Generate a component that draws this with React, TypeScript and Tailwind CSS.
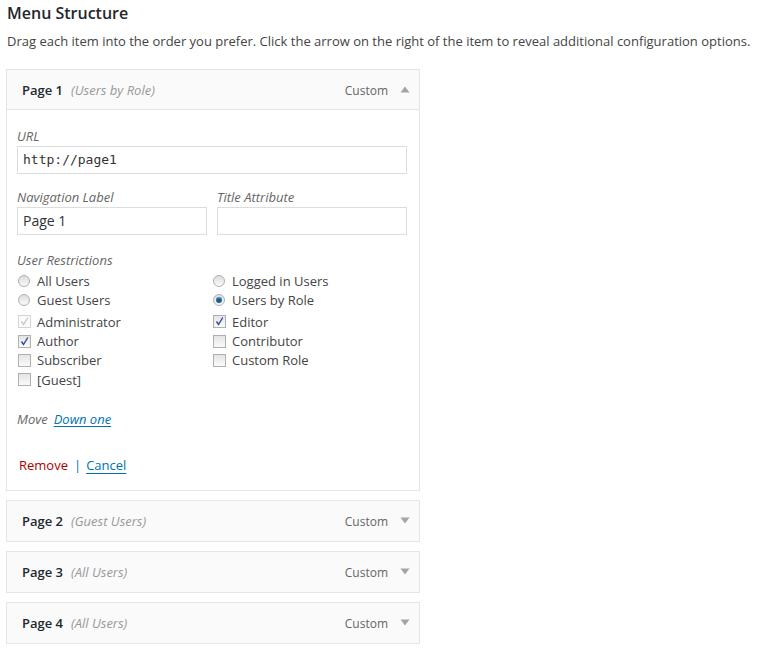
const font = { fontFamily: '"Open Sans", "Noto Sans", sans-serif' };

function Arrow({ up }: { up?: boolean }) {
  return (
    <svg width="10" height="7" viewBox="0 0 10 7" className="block">
      {up ? <path d="M5 0.5 L9.5 6.5 L0.5 6.5 Z" fill="#a0a5aa" /> : <path d="M0.5 0.5 L9.5 0.5 L5 6.5 Z" fill="#a0a5aa" />}
    </svg>
  );
}

function ItemHeader({ title, note, open }: { title: string; note: string; open?: boolean }) {
  return (
    <div className={`flex h-[40px] items-center bg-[#fafafa] pl-[15px] pr-[9px] pt-[2px] text-[13px] ${open ? 'border-b border-[#e5e5e5]' : ''}`}>
      <span className="font-semibold text-[#23282d]">{title}</span>
      <span className="ml-[8px] italic text-[#999]">{note}</span>
      <span className="ml-auto text-[12px] text-[#666]">Custom</span>
      <span className="ml-[12px] -mt-[2px]">
        <Arrow up={open} />
      </span>
    </div>
  );
}

function Radio({ label, checked }: { label: string; checked?: boolean }) {
  return (
    <div className="flex h-[19px] items-center">
      <span className="ml-[1px] flex h-[12px] w-[12px] items-center justify-center rounded-full border border-[#b0b0b0] bg-gradient-to-b from-[#dcdcdc] to-[#fafafa]">
        {checked && <span className="h-[6px] w-[6px] rounded-full bg-[#1b5e8c] shadow-[inset_0_1px_1px_#5ab0e0]" />}
      </span>
      <span className="ml-[7px]">{label}</span>
    </div>
  );
}

function Check({ label, checked, disabled }: { label: string; checked?: boolean; disabled?: boolean }) {
  return (
    <div className="flex h-[19.4px] items-center">
      <span
        className={`ml-[1px] flex h-[13px] w-[13px] items-center justify-center border ${
          disabled ? 'border-[#d4d4d4] bg-[#fbfbfb]' : 'border-[#b0b0b0] bg-gradient-to-b from-[#e4e4e4] to-[#fbfbfb]'
        }`}
      >
        {checked && (
          <svg width="11" height="11" viewBox="0 0 11 11">
            <path d="M2.5 5.5 L4.5 8.5 L8.8 1.5" fill="none" stroke={disabled ? '#c8c8c8' : '#2f4a9a'} strokeWidth="1.4" />
          </svg>
        )}
      </span>
      <span className="ml-[6px]">{label}</span>
    </div>
  );
}

export default function App() {
  return (
    <div className="min-h-[654px] w-[780px] bg-white text-[13px] text-[#444]" style={font}>
      <div className="pl-[7px] pt-[3px] text-[16px] font-semibold leading-[20px] text-[#23282d]">Menu Structure</div>
      <p className="mt-[9px] pl-[7px] leading-[18px]">
        Drag each item into the order you prefer. Click the arrow on the right of the item to reveal additional configuration options.
      </p>

      <div className="ml-[6px] mt-[19px] w-[414px]">
        <div className="border border-[#e5e5e5]">
          <ItemHeader title="Page 1" note="(Users by Role)" open />
          <div className="bg-white pb-[16px] pl-[10px] pr-[12px] pt-[17px] leading-[18px]">
            <div className="italic text-[#666]">URL</div>
            <div className="mt-[1px] flex h-[28px] w-[390px] items-center border border-[#ddd] px-[5px] text-[13px] text-[#333]" style={{ fontFamily: '"DejaVu Sans Mono", "Liberation Mono", monospace' }}>
              http://page1
            </div>

            <div className="mt-[14px] flex w-[390px] gap-[10px]">
              <div className="w-[190px]">
                <div className="italic text-[#666]">Navigation Label</div>
                <div className="mt-[1px] flex h-[28px] items-center border border-[#ddd] px-[5px] text-[14px] text-[#333]">Page 1</div>
              </div>
              <div className="w-[190px]">
                <div className="italic text-[#666]">Title Attribute</div>
                <div className="mt-[1px] h-[28px] border border-[#ddd]" />
              </div>
            </div>

            <div className="mt-[16px] italic text-[#666]">User Restrictions</div>
            <div className="mt-[2px] grid w-[390px] grid-cols-[195px_195px]">
              <Radio label="All Users" />
              <Radio label="Logged in Users" />
              <Radio label="Guest Users" />
              <Radio label="Users by Role" checked />
            </div>
            <div className="mt-[3px] grid w-[390px] grid-cols-[195px_195px]">
              <div>
                <Check label="Administrator" checked disabled />
                <Check label="Author" checked />
                <Check label="Subscriber" />
                <Check label="[Guest]" />
              </div>
              <div>
                <Check label="Editor" checked />
                <Check label="Contributor" />
                <Check label="Custom Role" />
              </div>
            </div>

            <div className="mt-[20px] flex">
              <span className="italic text-[#666]">Move</span>
              <a className="ml-[6px] italic text-[#0073aa] underline underline-offset-2">Down one</a>
            </div>

            <div className="mt-[28px] flex pl-[2px]">
              <a className="text-[#a00]">Remove</a>
              <span className="ml-[6px] text-[#0073aa]">|</span>
              <a className="ml-[5px] text-[#0073aa] underline decoration-[#0073aa] underline-offset-[3px]">Cancel</a>
            </div>
          </div>
        </div>

        <div className="mt-[9px] border border-[#e5e5e5]">
          <ItemHeader title="Page 2" note="(Guest Users)" />
        </div>
        <div className="mt-[9px] border border-[#e5e5e5]">
          <ItemHeader title="Page 3" note="(All Users)" />
        </div>
        <div className="mt-[9px] border border-[#e5e5e5]">
          <ItemHeader title="Page 4" note="(All Users)" />
        </div>
      </div>
    </div>
  );
}
